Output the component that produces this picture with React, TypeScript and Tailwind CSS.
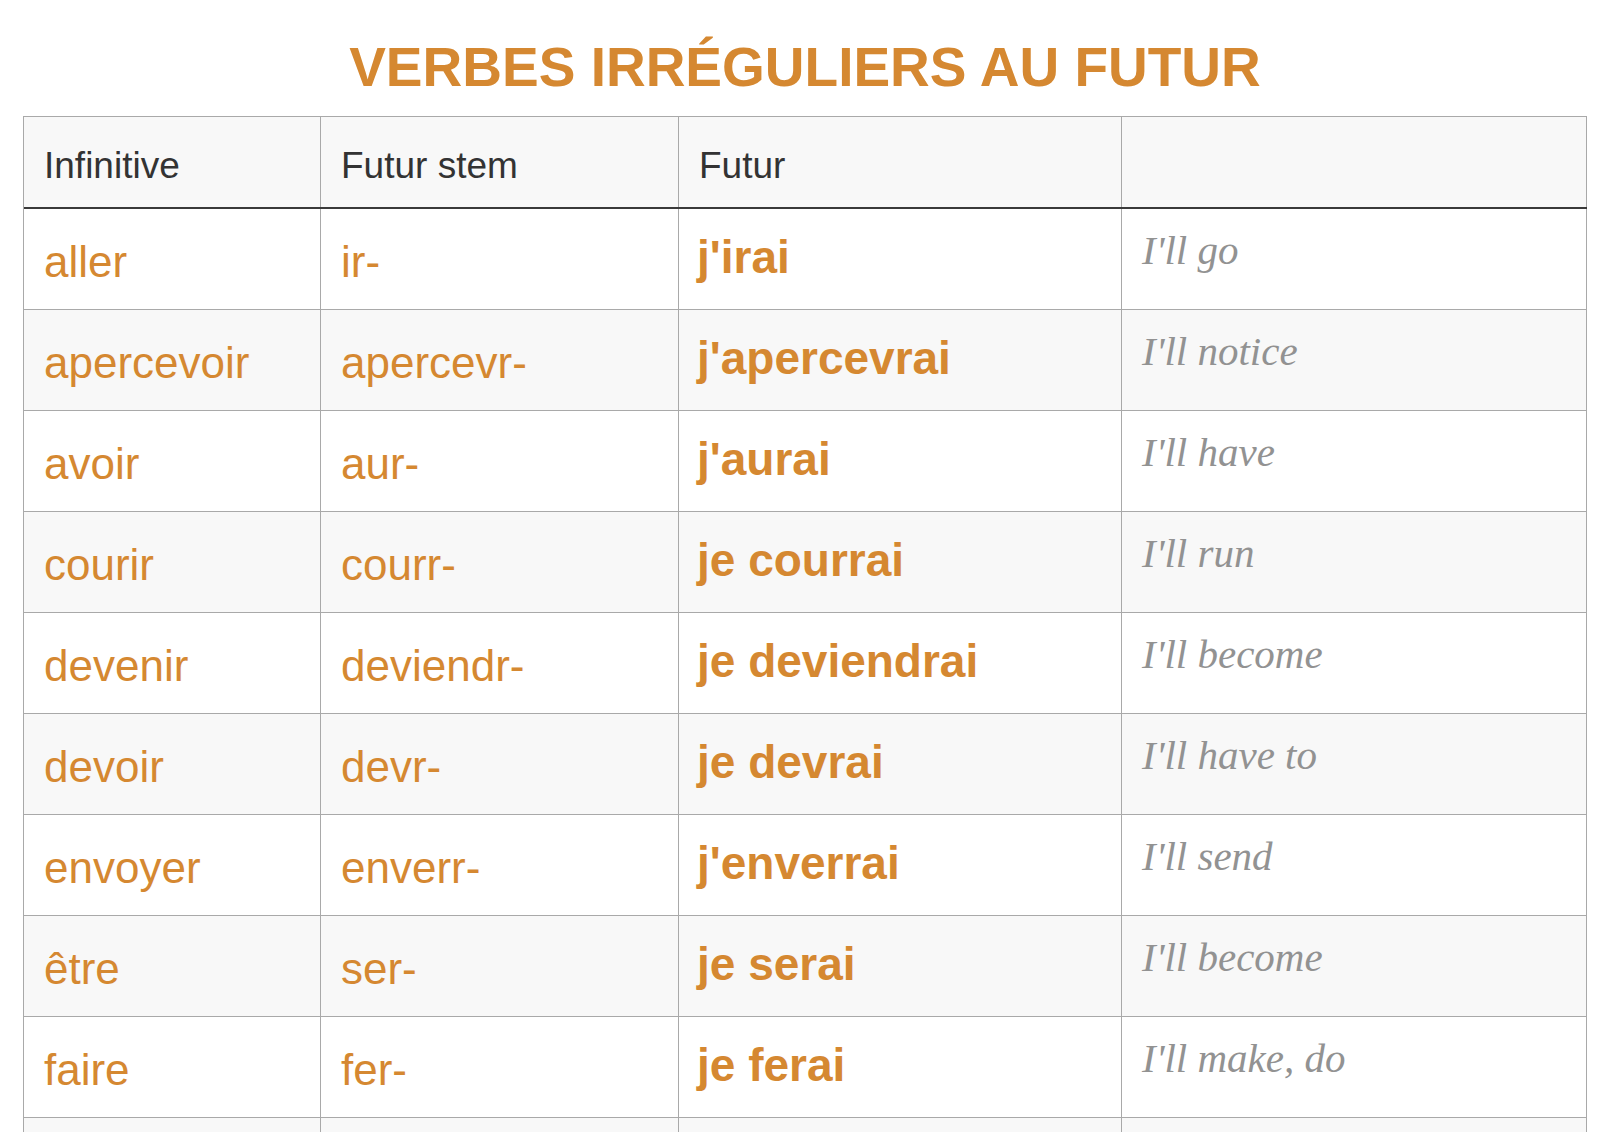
const rows: [string, string, string, string][] = [
  ["aller", "ir-", "j'irai", "I'll go"],
  ["apercevoir", "apercevr-", "j'apercevrai", "I'll notice"],
  ["avoir", "aur-", "j'aurai", "I'll have"],
  ["courir", "courr-", "je courrai", "I'll run"],
  ["devenir", "deviendr-", "je deviendrai", "I'll become"],
  ["devoir", "devr-", "je devrai", "I'll have to"],
  ["envoyer", "enverr-", "j'enverrai", "I'll send"],
  ["être", "ser-", "je serai", "I'll become"],
  ["faire", "fer-", "je ferai", "I'll make, do"],
  ["falloir", "faudr-", "il faudra", "it will be necessary"],
];

const sans = "font-['Liberation_Sans',Arial,sans-serif]";
const cols = "grid grid-cols-[297px_358px_443px_465px]";

export default function App() {
  return (
    <div className="h-[1132px] overflow-hidden bg-white">
      <div className="ml-[23px] w-[1564px] pt-[40px]">
        <h1 className={`${sans} text-center text-[55px] font-bold leading-none text-[#d58831]`}>
          VERBES IRRÉGULIERS AU FUTUR
        </h1>

        <div className={`mt-[21px] border-l border-t border-[#a9a9a9] ${sans}`}>
          {/* header */}
          <div className={`${cols} border-b-2 border-[#3a3a3a] bg-[#f8f8f8] text-[37px] leading-none text-[#333]`}>
            <div className="h-[90px] border-r border-[#a9a9a9] px-[20px] pt-[30px]">Infinitive</div>
            <div className="h-[90px] border-r border-[#a9a9a9] px-[20px] pt-[30px]">Futur stem</div>
            <div className="h-[90px] border-r border-[#a9a9a9] px-[20px] pt-[30px]">Futur</div>
            <div className="h-[90px] border-r border-[#a9a9a9] px-[20px] pt-[30px]"></div>
          </div>

          {rows.map(([inf, stem, fut, en], i) => (
            <div
              key={inf}
              className={`${cols} border-b border-[#a9a9a9] ${i % 2 === 1 ? "bg-[#f8f8f8]" : "bg-white"}`}
            >
              <div className="h-[100px] border-r border-[#a9a9a9] px-[20px] pt-[31px] text-[44px] leading-none text-[#d58831]">
                {inf}
              </div>
              <div className="h-[100px] border-r border-[#a9a9a9] px-[20px] pt-[31px] text-[44px] leading-none text-[#d58831]">
                {stem}
              </div>
              <div className="h-[100px] border-r border-[#a9a9a9] px-[18px] pt-[25px] text-[46px] font-bold leading-none text-[#d58831]">
                {fut}
              </div>
              <div className="h-[100px] border-r border-[#a9a9a9] px-[20px] pt-[21px] font-['Liberation_Serif',Georgia,serif] text-[41px] italic leading-none text-[#929292]">
                {en}
              </div>
            </div>
          ))}
        </div>
      </div>
    </div>
  );
}
